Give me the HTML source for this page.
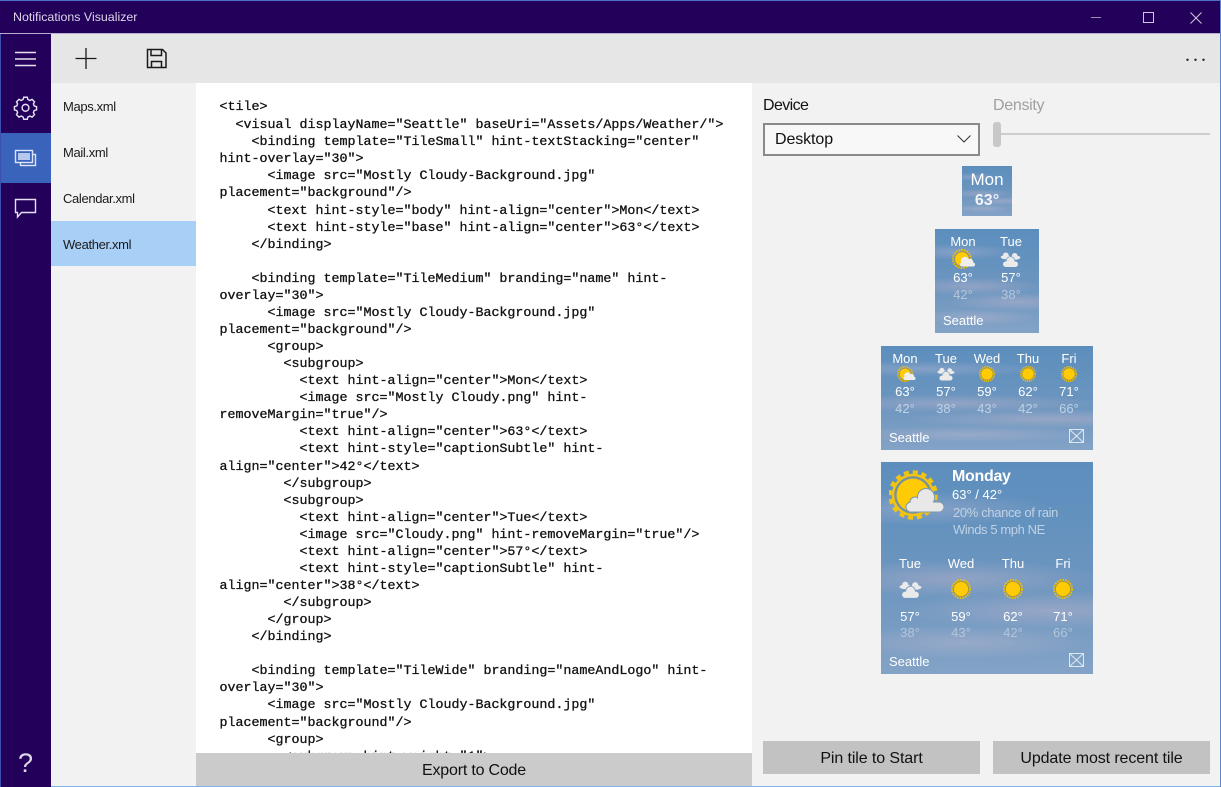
<!DOCTYPE html>
<html><head><meta charset="utf-8"><style>
html,body{margin:0;padding:0;width:1221px;height:787px;overflow:hidden;background:#f2f2f2}
body{position:relative;font-family:"Liberation Sans",sans-serif;color:#1a1a1a}
.a{position:absolute}
.t{position:absolute;white-space:nowrap;line-height:20px;transform:translateX(-50%)}
.l{position:absolute;white-space:nowrap;line-height:20px}
.code div{position:absolute;left:23.5px;margin-top:1px;font:13.33px/17px "Liberation Mono",monospace;white-space:pre;color:#111;-webkit-text-stroke:.3px #111}
.tile{position:absolute;overflow:hidden;color:#fff;background:
radial-gradient(ellipse 60% 8% at 20% 22%,rgba(200,190,215,.35),transparent),
radial-gradient(ellipse 70% 9% at 35% 55%,rgba(205,185,205,.4),transparent),
radial-gradient(ellipse 70% 9% at 80% 70%,rgba(205,185,205,.4),transparent),
radial-gradient(ellipse 60% 8% at 40% 85%,rgba(205,190,210,.35),transparent),
linear-gradient(#5c8ebd,#6b95bf 55%,#83a3c6)}
.tile .t,.tile .l{font-size:13px;line-height:16px}
.dim{color:#c0d2e4!important}
.dim2{color:#b5c6da!important}
.btn{position:absolute;background:#c2c2c2;text-align:center;font-size:16px;letter-spacing:-.1px;color:#111}
.li{font-size:13px;letter-spacing:-.35px}
</style></head><body>
<svg width="0" height="0" style="position:absolute"><defs>
<g id="sun"><circle cx="10" cy="10" r="8.8" fill="none" stroke="#e9bd10" stroke-width="2.4" stroke-dasharray="1.7 1"/><circle cx="10" cy="10" r="7.6" fill="#ffcb05" stroke="#a8983c" stroke-width="1"/></g>
<g id="cloud"><g fill="#eaeaea"><circle cx="6" cy="3.500" r="3"/><ellipse cx="6" cy="5.500" rx="5.500" ry="2.200"/><circle cx="15.500" cy="4" r="3"/><ellipse cx="16" cy="6" rx="5.500" ry="2.200"/></g><circle cx="11" cy="9.500" r="5" fill="#6a96c0"/><circle cx="11" cy="9.500" r="4.200" fill="#eaeaea"/><rect x="3" y="10" width="16" height="6" rx="3" fill="#eaeaea"/></g>
<g id="psun"><circle cx="10" cy="10" r="8.800" fill="none" stroke="#e9bd10" stroke-width="2.400" stroke-dasharray="1.700 1"/><circle cx="10" cy="10" r="7.400" fill="#ffcb05" stroke="#8f8f70" stroke-width="1"/><circle cx="13" cy="12" r="4.200" fill="#eee"/><circle cx="18" cy="13" r="3.200" fill="#eee"/><rect x="8" y="13.500" width="15" height="4" rx="2" fill="#eee"/></g>
<g id="x" fill="none" stroke="#dfe8f0" stroke-width="1"><rect x=".5" y=".5" width="14" height="13"/><path d="M.5.5l14 13M14.5.5l-14 13"/></g>
</defs></svg>

<!-- title bar -->
<div class="a" style="left:0;top:0;width:1221px;height:34px;background:#23005a;border-top:1px solid #4a6fc4;box-sizing:border-box;border-bottom:1px solid #b9add0"></div>
<div class="l" style="left:13px;top:7px;font-size:12.4px;color:#ddd6ea">Notifications Visualizer</div>
<svg class="a" style="left:1090px;top:6px" width="131" height="22" fill="none" stroke="#cfc8dc" stroke-width="1"><path d="M1 11.500h10" stroke="#9e90b8"/><rect x="53.500" y="6.500" width="10" height="10"/><path d="M100.500 6.500l11 11M111.500 6.500l-11 11"/></svg>

<!-- sidebar -->
<div class="a" style="left:0;top:34px;width:51px;height:753px;background:#23005a;border-left:1px solid #3c50b0;box-sizing:border-box"></div>
<div class="a" style="left:1px;top:133px;width:50px;height:50px;background:#3a64bb"></div>
<svg class="a" style="left:0;top:34px" width="51" height="192" fill="none" stroke="#e6e0f0" stroke-width="1.400">
<path d="M15 18.500h21M15 25h21M15 31.500h21"/>
<g transform="translate(25.500,72) scale(.9)" stroke-width="1.600"><circle cy="2" r="3.800"/><path d="M-2-9.700h4l.7 2.500 2.200 1 2.400-1.200 2.700 2.800-1.200 2.300.9 2.200 2.600.8v3.600l-2.600.8-.9 2.200 1.200 2.300-2.700 2.800-2.400-1.200-2.200 1-.7 2.500h-4l-.7-2.500-2.200-1-2.400 1.200-2.700-2.800 1.200-2.300-.9-2.200-2.600-.8v-3.600l2.600-.8.9-2.200-1.200-2.300 2.700-2.800 2.400 1.200 2.200-1z"/></g>
<rect x="20.500" y="120.500" width="15" height="11" stroke="#dce6f8"/><rect x="15.500" y="116.500" width="17" height="12" stroke="#dce6f8" fill="#3a64bb"/><rect x="18" y="119" width="12" height="7" fill="#b5c8ec" stroke="none"/>
<path d="M15.500 165.500h20v13h-14l-4 4.500v-4.500h-2z"/>
</svg>
<div class="l" style="left:18px;top:747px;font-size:27px;line-height:32px;color:#ddd6ea">?</div>

<!-- toolbar -->
<div class="a" style="left:51px;top:34px;width:1170px;height:49px;background:#e6e6e6"></div>
<svg class="a" style="left:70px;top:44px" width="100" height="30" fill="none" stroke="#1a1a1a" stroke-width="1.300">
<path d="M16 4v21M5.500 14.500h21"/>
<path d="M77.500 5.500h15l3.500 3.500v14.500h-18.500z M81 5.500v6h10.500v-6M81.500 23.500v-6h10v6" stroke-width="1.500"/></svg>
<svg class="a" style="left:1185px;top:57px" width="22" height="6" fill="#222"><circle cx="2.500" cy="2.800" r="1.200"/><circle cx="10.500" cy="2.800" r="1.200"/><circle cx="18.500" cy="2.800" r="1.200"/></svg>

<!-- list -->
<div class="a" style="left:51px;top:221px;width:145px;height:45px;background:#a8cff6"></div>
<div class="l li" style="left:63px;top:97px">Maps.xml</div>
<div class="l li" style="left:63px;top:143px">Mail.xml</div>
<div class="l li" style="left:63px;top:189px">Calendar.xml</div>
<div class="l li" style="left:63px;top:235px">Weather.xml</div>

<!-- code -->
<div class="a code" style="left:196px;top:83px;width:556px;height:670px;background:#fff;overflow:hidden">
<div style="top:15px">&lt;tile&gt;</div>
<div style="top:33px">  &lt;visual displayName="Seattle" baseUri="Assets/Apps/Weather/"&gt;</div>
<div style="top:50px">    &lt;binding template="TileSmall" hint-textStacking="center"</div>
<div style="top:67px">hint-overlay="30"&gt;</div>
<div style="top:84px">      &lt;image src="Mostly Cloudy-Background.jpg"</div>
<div style="top:101px">placement="background"/&gt;</div>
<div style="top:119px">      &lt;text hint-style="body" hint-align="center"&gt;Mon&lt;/text&gt;</div>
<div style="top:136px">      &lt;text hint-style="base" hint-align="center"&gt;63°&lt;/text&gt;</div>
<div style="top:153px">    &lt;/binding&gt;</div>
<div style="top:187px">    &lt;binding template="TileMedium" branding="name" hint-</div>
<div style="top:204px">overlay="30"&gt;</div>
<div style="top:221px">      &lt;image src="Mostly Cloudy-Background.jpg"</div>
<div style="top:238px">placement="background"/&gt;</div>
<div style="top:255px">      &lt;group&gt;</div>
<div style="top:272px">        &lt;subgroup&gt;</div>
<div style="top:289px">          &lt;text hint-align="center"&gt;Mon&lt;/text&gt;</div>
<div style="top:306px">          &lt;image src="Mostly Cloudy.png" hint-</div>
<div style="top:323px">removeMargin="true"/&gt;</div>
<div style="top:340px">          &lt;text hint-align="center"&gt;63°&lt;/text&gt;</div>
<div style="top:357px">          &lt;text hint-style="captionSubtle" hint-</div>
<div style="top:375px">align="center"&gt;42°&lt;/text&gt;</div>
<div style="top:392px">        &lt;/subgroup&gt;</div>
<div style="top:409px">        &lt;subgroup&gt;</div>
<div style="top:426px">          &lt;text hint-align="center"&gt;Tue&lt;/text&gt;</div>
<div style="top:443px">          &lt;image src="Cloudy.png" hint-removeMargin="true"/&gt;</div>
<div style="top:460px">          &lt;text hint-align="center"&gt;57°&lt;/text&gt;</div>
<div style="top:477px">          &lt;text hint-style="captionSubtle" hint-</div>
<div style="top:494px">align="center"&gt;38°&lt;/text&gt;</div>
<div style="top:511px">        &lt;/subgroup&gt;</div>
<div style="top:528px">      &lt;/group&gt;</div>
<div style="top:545px">    &lt;/binding&gt;</div>
<div style="top:579px">    &lt;binding template="TileWide" branding="nameAndLogo" hint-</div>
<div style="top:596px">overlay="30"&gt;</div>
<div style="top:613px">      &lt;image src="Mostly Cloudy-Background.jpg"</div>
<div style="top:631px">placement="background"/&gt;</div>
<div style="top:648px">      &lt;group&gt;</div>
<div style="top:665px">        &lt;subgroup hint-weight="1"&gt;</div>
</div>
<div class="a" style="left:196px;top:753px;width:556px;height:34px;background:#cbcbcb;text-align:center;font-size:16px;letter-spacing:-.2px;line-height:36px;color:#111">Export to Code</div>

<!-- right -->
<div class="l" style="left:763px;top:96px;font-size:16px;letter-spacing:-.6px;color:#111">Device</div>
<div class="l" style="left:993px;top:96px;font-size:16px;letter-spacing:-.3px;color:#a0a0a0">Density</div>
<div class="a" style="left:763px;top:123px;width:217px;height:33px;box-sizing:border-box;background:#f8f8f8;border:2px solid #8a8a8a"></div>
<div class="l" style="left:775px;top:130px;font-size:16px;letter-spacing:-.1px;color:#111">Desktop</div>
<svg class="a" style="left:956px;top:134px" width="16" height="10" fill="none" stroke="#333" stroke-width="1"><path d="M1.500 1.500l6.500 6.500 6.500-6.500"/></svg>
<div class="a" style="left:1000px;top:133px;width:210px;height:2px;background:#cdcdcd"></div>
<div class="a" style="left:993px;top:122px;width:8px;height:25px;background:#c8c8c8;border-radius:3px"></div>

<!-- small -->
<div class="tile" style="left:962px;top:166px;width:50px;height:50px">
<div class="t" style="left:25px;top:5px;font-size:17px;line-height:18px">Mon</div>
<div class="t" style="left:25px;top:26px;font-size:16px;line-height:18px;font-weight:bold;color:#f0f4f8">63°</div>
</div>

<!-- medium -->
<div class="tile" style="left:935px;top:229px;width:104px;height:104px">
<div class="t" style="left:28px;top:5px">Mon</div><div class="t" style="left:76px;top:5px">Tue</div>
<svg class="a" style="left:17px;top:20px" width="26" height="20" viewBox="0 0 26 20"><use href="#psun"/></svg>
<svg class="a" style="left:65px;top:23px" width="21" height="15" viewBox="0 0 22 16"><use href="#cloud"/></svg>
<div class="t" style="left:28px;top:41px">63°</div><div class="t" style="left:76px;top:41px">57°</div>
<div class="t dim2" style="left:28px;top:58px">42°</div><div class="t dim2" style="left:76px;top:58px">38°</div>
<div class="l" style="left:8px;top:84px">Seattle</div>
</div>

<!-- wide -->
<div class="tile" style="left:881px;top:346px;width:212px;height:104px">
<div class="t" style="left:24px;top:5px">Mon</div><div class="t" style="left:65px;top:5px">Tue</div><div class="t" style="left:106px;top:5px">Wed</div><div class="t" style="left:147px;top:5px">Thu</div><div class="t" style="left:188px;top:5px">Fri</div>
<svg class="a" style="left:16px;top:20px" width="21" height="16" viewBox="0 0 26 20"><use href="#psun"/></svg>
<svg class="a" style="left:56px;top:21px" width="18" height="14" viewBox="0 0 22 16"><use href="#cloud"/></svg>
<svg class="a" style="left:98px;top:20px" width="16" height="16" viewBox="0 0 20 20"><use href="#sun"/></svg>
<svg class="a" style="left:139px;top:20px" width="16" height="16" viewBox="0 0 20 20"><use href="#sun"/></svg>
<svg class="a" style="left:180px;top:20px" width="16" height="16" viewBox="0 0 20 20"><use href="#sun"/></svg>
<div class="t" style="left:24px;top:38px">63°</div><div class="t" style="left:65px;top:38px">57°</div><div class="t" style="left:106px;top:38px">59°</div><div class="t" style="left:147px;top:38px">62°</div><div class="t" style="left:188px;top:38px">71°</div>
<div class="t dim" style="left:24px;top:55px">42°</div><div class="t dim" style="left:65px;top:55px">38°</div><div class="t dim" style="left:106px;top:55px">43°</div><div class="t dim" style="left:147px;top:55px">42°</div><div class="t dim" style="left:188px;top:55px">66°</div>
<div class="l" style="left:8px;top:84px">Seattle</div>
<svg class="a" style="left:188px;top:83px" width="16" height="15"><use href="#x"/></svg>
</div>

<!-- large -->
<div class="tile" style="left:881px;top:462px;width:212px;height:212px">
<svg class="a" style="left:8px;top:8px" width="56" height="50" fill="none">
<circle cx="24" cy="25" r="22.500" stroke="#f0c410" stroke-width="4.500" stroke-dasharray="5 3.800"/>
<circle cx="24" cy="25" r="20" stroke="#f0c410" stroke-width="2.500"/>
<circle cx="24" cy="25" r="17.500" fill="#ffcb05" stroke="#7d9298" stroke-width="2.200"/>
<g fill="#e8e8e8" stroke="#7d96aa" stroke-width="1"><circle cx="37" cy="27" r="8.500"/><circle cx="26" cy="32" r="5"/><rect x="17" y="32" width="38" height="10" rx="5"/></g>
<g fill="#e8e8e8"><circle cx="37" cy="28" r="8"/><circle cx="26" cy="33" r="4.500"/><rect x="18" y="33" width="36" height="8.500" rx="4"/></g>
</svg>
<div class="l" style="left:71px;top:5px;font-size:16px;line-height:20px;font-weight:bold;letter-spacing:-.3px">Monday</div>
<div class="l" style="left:71px;top:25px;font-size:13px">63° / 42°</div>
<div class="l dim" style="left:72px;top:43px;font-size:13px;letter-spacing:-.35px">20% chance of rain</div>
<div class="l dim" style="left:72px;top:60px;font-size:13px;letter-spacing:-.4px">Winds 5 mph NE</div>
<div class="t" style="left:29px;top:94px">Tue</div><div class="t" style="left:80px;top:94px">Wed</div><div class="t" style="left:132px;top:94px">Thu</div><div class="t" style="left:182px;top:94px">Fri</div>
<svg class="a" style="left:18px;top:119px" width="23" height="17" viewBox="0 0 22 16"><use href="#cloud"/></svg>
<svg class="a" style="left:70px;top:117px" width="20" height="20"><use href="#sun"/></svg>
<svg class="a" style="left:122px;top:117px" width="20" height="20"><use href="#sun"/></svg>
<svg class="a" style="left:172px;top:117px" width="20" height="20"><use href="#sun"/></svg>
<div class="t" style="left:29px;top:147px">57°</div><div class="t" style="left:80px;top:147px">59°</div><div class="t" style="left:132px;top:147px">62°</div><div class="t" style="left:182px;top:147px">71°</div>
<div class="t dim2" style="left:29px;top:163px">38°</div><div class="t dim2" style="left:80px;top:163px">43°</div><div class="t dim2" style="left:132px;top:163px">42°</div><div class="t dim2" style="left:182px;top:163px">66°</div>
<div class="l" style="left:8px;top:192px">Seattle</div>
<svg class="a" style="left:188px;top:191px" width="16" height="15"><use href="#x"/></svg>
</div>

<div class="btn" style="left:763px;top:741px;width:217px;height:33px;line-height:35px">Pin tile to Start</div>
<div class="btn" style="left:993px;top:741px;width:217px;height:33px;line-height:35px">Update most recent tile</div>
<div class="a" style="left:51px;top:785.500px;width:1170px;height:1.500px;background:#7db4ea"></div>
<div class="a" style="left:1220px;top:0;width:1px;height:787px;background:#5f86d0"></div>
</body></html>
